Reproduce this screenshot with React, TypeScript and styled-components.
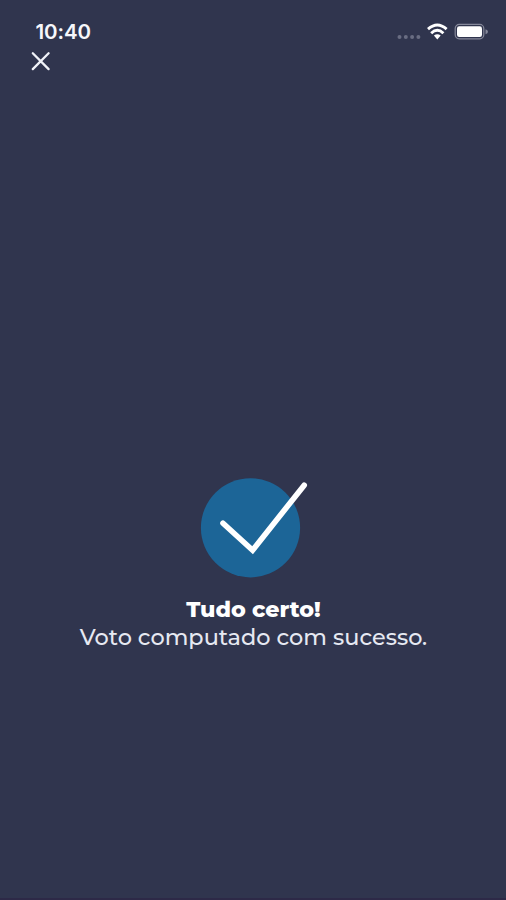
import React from "react";
import styled, { createGlobalStyle } from "styled-components";

const GlobalStyle = createGlobalStyle`
  * { box-sizing: border-box; }
  body { margin: 0; background: #30354e; }
`;

const Screen = styled.div`
  display: flex;
  flex-direction: column;
  width: 100%;
  height: 900px;
  overflow: hidden;
  background: #30354e;
  border-bottom: 2px solid #2d2947;
  color: #fff;
  font-family: Montserrat, Inter, "Liberation Sans", sans-serif;
`;

const StatusBar = styled.header`
  display: flex;
  justify-content: space-between;
  align-items: center;
  height: 48px;
  padding: 15px 17px 0 35.5px;
`;

const Clock = styled.time`
  font-family: Inter, sans-serif;
  font-size: 20.5px;
  font-weight: 600;
  line-height: 24px;
  letter-spacing: -0.1px;
  color: #f6f7fb;
`;

const StatusIcons = styled.svg`
  display: block;
  width: 92px;
  height: 20px;
`;

const CloseButton = styled.button`
  display: flex;
  width: 20px;
  height: 20px;
  margin: 3px 0 0 31px;
  padding: 0;
  border: 0;
  background: none;
  color: #f0f2f8;
`;

const Result = styled.main`
  display: flex;
  flex-direction: column;
  align-items: center;
  margin-top: 405px;
`;

const CheckMark = styled.svg`
  display: block;
  width: 110px;
  height: 104px;
`;

const Title = styled.h1`
  margin: 16px 0 0;
  padding-left: 1px;
  font-size: 22.2px;
  font-weight: 800;
  line-height: 28px;
`;

const Message = styled.p`
  margin: -1px 0 0;
  padding-left: 1px;
  font-size: 22.4px;
  font-weight: 500;
  line-height: 28px;
  color: #e6e9f2;
`;

export default function App() {
  return (
    <Screen>
      <GlobalStyle />
      <StatusBar>
        <Clock>10:40</Clock>
        <StatusIcons viewBox="0 0 92 20" aria-hidden="true">
          <g fill="#696d82">
            <circle cx="2.5" cy="15" r="2" />
            <circle cx="8.8" cy="15" r="2" />
            <circle cx="15.1" cy="15" r="2" />
            <circle cx="21.4" cy="15" r="2" />
          </g>
          <g fill="none" stroke="#fff" strokeWidth="2.9">
            <path d="M31 7.2 Q40.3 -1.2 49.6 7.2" />
            <path d="M34.2 11.2 Q40.3 5.4 46.4 11.2" />
          </g>
          <path d="M36.9 13.6 Q40.3 10.7 43.7 13.6 L40.3 17.6 Z" fill="#fff" />
          <rect x="58.2" y="2.4" width="28.6" height="14.4" rx="4" fill="none" stroke="#85889a" strokeWidth="1.2" />
          <rect x="60" y="4.2" width="25" height="10.8" rx="2.2" fill="#fff" />
          <path d="M88.5 7.2 Q91 8 91 9.7 Q91 11.4 88.5 12.2 Z" fill="#85889a" />
        </StatusIcons>
      </StatusBar>
      <CloseButton aria-label="Fechar">
        <svg width="20" height="20" viewBox="0 0 20 20">
          <path d="M1.8 2.3 L17.6 18.1 M17.6 2.3 L1.8 18.1" fill="none" stroke="currentColor" strokeWidth="2.3" strokeLinecap="round" />
        </svg>
      </CloseButton>
      <Result>
        <CheckMark viewBox="0 0 110 104" aria-hidden="true">
          <circle cx="52.5" cy="51.8" r="49.6" fill="#1c6597" />
          <path d="M25 47.2 L54.6 74.2 L106.2 9.2" fill="none" stroke="#fff" strokeWidth="5.6" strokeLinecap="round" />
        </CheckMark>
        <Title>Tudo certo!</Title>
        <Message>Voto computado com sucesso.</Message>
      </Result>
    </Screen>
  );
}
